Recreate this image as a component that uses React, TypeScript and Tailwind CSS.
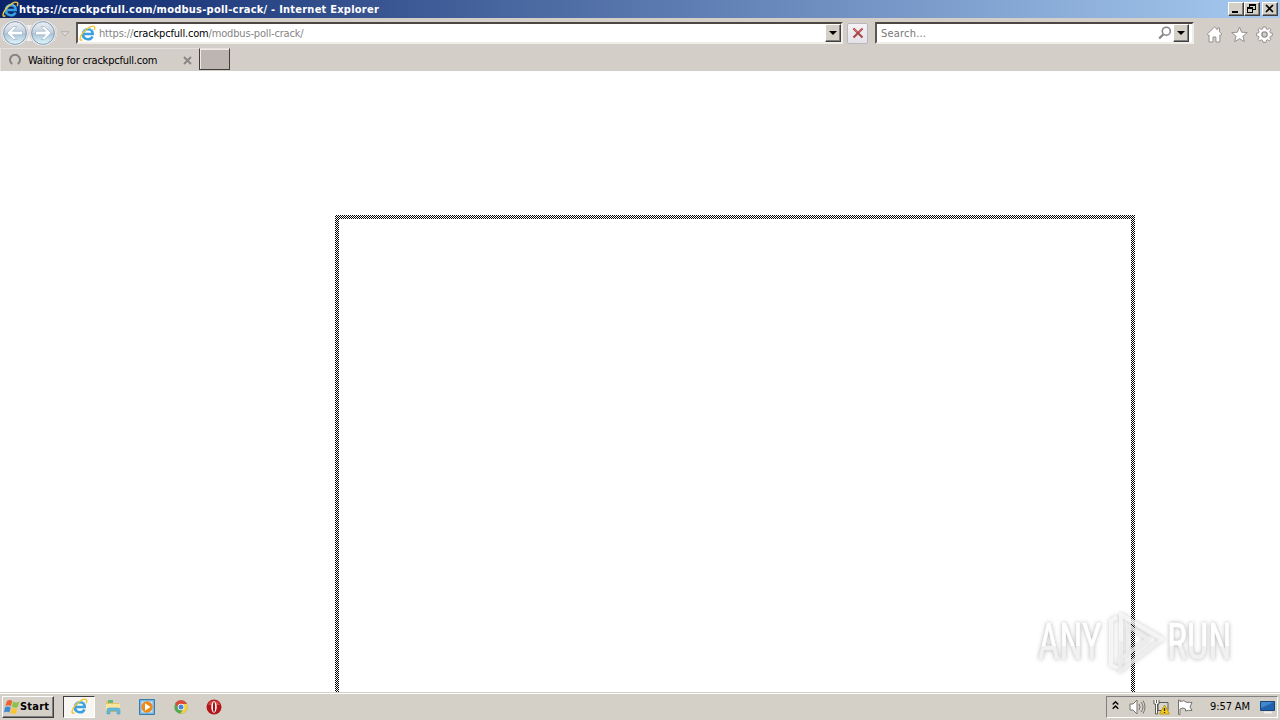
import React from 'react';

const UI_FONT = "font-['DejaVu_Sans_Condensed','DejaVu_Sans',Tahoma,sans-serif] [font-stretch:condensed]";
const CHECKER = 'bg-[repeating-conic-gradient(#000_0_25%,#fff_0_50%)] bg-[length:2px_2px]';
const RAISED = 'bg-[#d4d0c8] border border-t-white border-l-white border-r-[#404040] border-b-[#404040] shadow-[inset_-1px_-1px_0_#808080]';

const IeIcon: React.FC<{ size: number }> = ({ size }) => (
  <svg width={size} height={size} viewBox="0 0 18 18" fill="none" className="shrink-0">
    <path d="M14.3 12.1A5.3 5.2 0 0 1 4.2 9.8C4.4 6.6 6.6 4.6 9.6 4.6c3 0 4.9 2 4.9 5H5.4" stroke="#3a9fe0" strokeWidth="2.7" />
    <path d="M3.6 8.6C4.2 5.4 6.6 3.8 9.8 3.7c2 0 3.6.8 4.6 2.2" stroke="#7fd0f7" strokeWidth="1" />
    <path d="M3.6 15.6C-.2 17.6.6 12.8 4 8.6 7.9 3.6 14.1-.3 16.3 1.8c.8.9.4 2.3-.3 3.6" stroke="#f3c636" strokeWidth="1.5" />
  </svg>
);

const NavButton: React.FC<{ forward?: boolean }> = ({ forward }) => (
  <svg width="28" height="28" viewBox="0 0 28 28" className="shrink-0">
    <defs>
      <linearGradient id={forward ? 'fwd' : 'back'} x1="0" y1="0" x2="0" y2="1">
        <stop offset="0" stopColor="#eef0f4" />
        <stop offset=".48" stopColor="#c3d0de" />
        <stop offset=".52" stopColor="#a9c2d6" />
        <stop offset="1" stopColor="#e0f8fd" />
      </linearGradient>
    </defs>
    <circle cx="14" cy="14" r="13.3" fill="#f0eff0" stroke="#c1bec0" strokeWidth=".7" />
    <circle cx="14" cy="14" r="11.4" fill={`url(#${forward ? 'fwd' : 'back'})`} stroke="#8299ae" strokeWidth="1" />
    <g transform={forward ? 'translate(28 0) scale(-1 1)' : undefined}>
      <path d="m6 14 6.5-6.5h3.4l-4.4 4.7H21.5v3.6h-10l4.4 4.7h-3.4Z" fill="#fff" stroke="#a6bacd" strokeWidth=".8" />
    </g>
  </svg>
);

const DropButton = () => (
  <div className={`w-4 h-[18px] flex items-center justify-center shrink-0 ${RAISED}`}>
    <svg width="8" height="4" viewBox="0 0 8 4"><path d="M0 0h8L4 4Z" fill="#000" /></svg>
  </div>
);

const TitleBar = () => (
  <div className="h-[18px] flex items-center pl-[2px] pr-[2px] bg-[linear-gradient(90deg,#0a246a,#a6caf0)]">
    <IeIcon size={17} />
    <span className="w-[365px] pt-px text-[11px] leading-[16px] tracking-[0.235px] font-bold text-white whitespace-nowrap">
      https://crackpcfull.com/modbus-poll-crack/ - Internet Explorer
    </span>
    <div className="ml-auto flex">
      <div className={`w-4 h-[14px] ${RAISED}`}>
        <svg width="14" height="12" viewBox="0 0 14 12"><path d="M3 8h6v2H3Z" fill="#000" /></svg>
      </div>
      <div className={`w-4 h-[14px] ${RAISED}`}>
        <svg width="14" height="12" viewBox="0 0 14 12" fill="none" stroke="#000" shapeRendering="crispEdges">
          <path d="M4.5 4V1.5h6v5H8M4 2h7M2.5 4.5h5v5h-5ZM2 5h6" />
        </svg>
      </div>
      <div className={`ml-[2px] w-4 h-[14px] ${RAISED}`}>
        <svg width="14" height="12" viewBox="0 0 14 12"><path d="m3 2 7 7m0-7L3 9" stroke="#000" strokeWidth="1.7" /></svg>
      </div>
    </div>
  </div>
);

const AddressRow = () => (
  <div className="h-[30px] flex items-center pl-[1px]">
    <div className="flex items-center rounded-full bg-[linear-gradient(#d4cec9_20%,#f0eeee_20%,#f0eeee_80%,#d4cec9_80%)]">
      <NavButton />
      <NavButton forward />
    </div>
    <svg width="10" height="6" viewBox="0 0 10 6" className="ml-[3px] mt-[2px]">
      <path d="M1 .7h8L5 5Z" fill="#e0dad5" stroke="#b4afad" />
    </svg>
    <div className="ml-[6px] w-[767px] h-[22px] flex items-center bg-white border-2 border-t-[#4c4743] border-l-[#5c5753] border-r-[#f1eeea] border-b-[#f1eeea]">
      <div className="ml-[1px]"><IeIcon size={17} /></div>
      <span className="ml-[3px] pt-[2px] text-[11px] leading-[16px] tracking-[-0.17px] text-[#858585] whitespace-nowrap">
        https://<span className="text-black">crackpcfull.com</span>/modbus-poll-crack/
      </span>
      <div className="ml-auto"><DropButton /></div>
    </div>
    <div className="ml-[4px] w-[21px] h-[21px] flex items-center justify-center rounded-[2px] border border-[#bab7bc] bg-[linear-gradient(#f5f3f6,#e5e2e8)]">
      <svg width="12" height="12" viewBox="0 0 12 12">
        <path d="m1.5 1.5 9 9m0-9-9 9" stroke="#a84b4b" strokeWidth="2.2" />
        <path d="m1 1 4 4m5.5-4L7 5" stroke="#e3706d" strokeWidth="1" />
      </svg>
    </div>
    <div className="ml-[7px] w-[319px] h-[22px] flex items-center bg-white border-2 border-t-[#4c4743] border-l-[#5c5753] border-r-[#f1eeea] border-b-[#f1eeea]">
      <span className="ml-[4px] pt-[2px] text-[11px] leading-[16px] text-[#777] tracking-[0.2px]">Search...</span>
      <svg width="14" height="14" viewBox="0 0 14 14" fill="none" stroke="#858585" className="ml-auto mr-[1px]">
        <circle cx="8.3" cy="5.2" r="4" strokeWidth="1.6" />
        <path d="m5.4 8.2-4.2 4.3" strokeWidth="2.2" />
      </svg>
      <DropButton />
      <div className="w-[3px]" />
    </div>
    <div className="ml-[12px] mt-[3px] flex gap-[8px]">
      <svg width="17" height="17" viewBox="0 0 17 17" fill="#fff" stroke="#96918f">
        <path d="M1 8.3 8.5 1l2.8 2.7V2h2.2v3.9L16 8.3l-1.3 1.2-.8-.7V16h-4v-5H7v5H3V8.8l-.8.7Z" />
      </svg>
      <svg width="17" height="17" viewBox="0 0 17 17" fill="#fff" stroke="#96918f">
        <path d="m8.5 1 2.1 5.2 5.7.4-4.4 3.6 1.5 5.5-4.9-3-4.9 3 1.5-5.5L.7 6.6l5.7-.4Z" />
      </svg>
      <svg width="17" height="17" viewBox="0 0 17 17" fill="#fff" stroke="#96918f">
        <path d="M7 1h3l.4 2 1.3.5 1.7-1.2 1.4 1.4-1 1.8.5 1.3 2 .4v2.6l-2 .5-.5 1.4 1 1.7-1.4 1.5-1.7-1.1-1.3.5-.4 2H7l-.5-2-1.2-.5-1.8 1.1L2 13.4l1.1-1.7-.5-1.4-2-.5V7.2l2-.4.5-1.3L2 3.7l1.5-1.4 1.8 1.2L6.5 3Z" />
        <circle cx="8.5" cy="8.5" r="2.6" fill="#d4cec8" strokeWidth="1.4" />
      </svg>
    </div>
  </div>
);

const TabRow = () => (
  <div className="h-[23px] flex">
    <div className="w-[199px] flex items-center pl-[8px] border-l border-t border-[#e5e0dc] bg-[#d4cec9]">
      <svg width="12" height="12" viewBox="0 0 12 12" fill="none" className="shrink-0">
        <path d="M3.2 10A5 5 0 1 1 8.8 10" stroke="#858181" strokeWidth="2" />
      </svg>
      <span className="ml-[7px] pt-[2px] text-[11px] leading-[16px] tracking-[-0.21px] text-black whitespace-nowrap">Waiting for crackpcfull.com</span>
      <svg width="9" height="9" viewBox="0 0 9 9" className="ml-auto mr-[7px]">
        <path d="m1 1 7 7m0-7L1 8" stroke="#898482" strokeWidth="1.8" />
      </svg>
    </div>
    <div className="w-[31px] h-[22px] bg-[#bdb5b1] border border-l-[#403c3a] border-t-[#e5e0dc] border-r-[#403c3a] border-b-[#403c3a] shadow-[inset_1px_1px_0_#eeeae6]" />
  </div>
);

const Watermark = () => (
  <svg width="250" height="84" viewBox="0 0 250 84" className="absolute left-[1030px] top-[603px] drop-shadow-[0_0_2px_rgba(0,0,0,0.3)]">
    <defs>
      <linearGradient id="wm" x1="0" y1="0" x2="0" y2="1">
        <stop offset=".56" stopColor="#fff" />
        <stop offset=".57" stopColor="#f1f1f1" />
      </linearGradient>
    </defs>
    <g className="font-['Roboto',sans-serif] text-[50px] font-normal" fill="url(#wm)" stroke="url(#wm)" strokeWidth=".6">
      <text transform="translate(8 56) scale(.745 1)">ANY</text>
      <text transform="translate(137 56) scale(.755 1)">RUN</text>
    </g>
    <g fill="none" strokeWidth="4" strokeLinejoin="round" opacity=".7">
      <path d="M87 14 81 18v44l7 3" stroke="#fff" />
      <path d="M91 60V12l41 24-42 32V56l28-20-20-13v27" stroke="#f4f4f4" />
      <path d="M91 38V12l41 24-4 2" stroke="#fff" />
    </g>
  </svg>
);

const Taskbar = () => (
  <div className="h-[28px] shrink-0 flex items-center bg-[#d4d0c8] shadow-[inset_0_1px_0_#d4d0c8,inset_0_2px_0_#fff] pt-[1px] pl-[2px] pr-[2px]">
    <div className={`w-[52px] h-[22px] flex items-center pl-[1px] ${RAISED}`}>
      <svg width="16" height="16" viewBox="0 0 16 16" className="shrink-0">
        <path d="M3 2q3-2 5.3 0L7 7.2Q4.5 5.5 1.4 7Z" fill="#e9652f" />
        <path d="M9.2 2.5q3 1.8 6.1 0L13.8 8Q11 9.5 7.9 7.7Z" fill="#8bc34a" />
        <path d="M1.2 8Q4 6.7 6.8 8.2L5.4 13.5Q3 12-.1 13.3Z" fill="#3e8bd0" />
        <path d="M7.7 8.7q3 1.6 5.8.2L12 14.3q-3 1.5-5.7-.2Z" fill="#f9c631" />
      </svg>
      <span className="pt-px text-[11px] leading-[16px] tracking-[0.2px] font-bold">Start</span>
    </div>
    <div className="ml-[9px] w-[32px] h-[22px] flex items-center justify-center bg-[#f7f6f3] border border-t-[#404040] border-l-[#404040] border-r-white border-b-white">
      <IeIcon size={17} />
    </div>
    <svg width="16" height="16" viewBox="0 0 16 16" className="ml-[10px]">
      <path d="M1 2h5l1 2h7v9H1Z" fill="#e7c45d" />
      <path d="M3 1h5v3H3Z" fill="#66b785" />
      <path d="M1 5h14v7H1Z" fill="#f8e69e" />
      <path d="M2 15v-4q0-2 2-2h9q2 0 2 2v4h-3v-3H5v3Z" fill="#62b9dd" stroke="#4b97b9" strokeWidth=".5" />
    </svg>
    <svg width="16" height="16" viewBox="0 0 16 16" className="ml-[18px]">
      <path d="M.5.5h15v15H.5Z" fill="#79b7e8" stroke="#347dac" />
      <path d="M2.5 2.5h11v11h-11Z" fill="#c9e6f7" />
      <circle cx="8" cy="8" r="5.7" fill="#ec8918" />
      <path d="m6 4.3 5.5 3.7L6 11.7Z" fill="#fff" />
    </svg>
    <svg width="14" height="14" viewBox="0 0 14 14" className="ml-[19px]">
      <circle cx="7" cy="7" r="6.7" fill="#55a852" />
      <path d="M1.2 3.6A6.7 6.7 0 0 1 13 4H7a3 3 0 0 0-2.7 4.3Z" fill="#dc4938" />
      <path d="M13 4a6.7 6.7 0 0 1-6.7 9.7L9.6 8.5Q10.4 6 9 4Z" fill="#f5ce43" />
      <circle cx="7" cy="7" r="3.3" fill="#fff" />
      <circle cx="7" cy="7" r="2.5" fill="#4785d8" />
    </svg>
    <svg width="16" height="16" viewBox="0 0 16 16" className="ml-[18px]">
      <circle cx="8" cy="8" r="7.5" fill="#b3171b" />
      <path d="M2 6a6.4 6.4 0 0 1 12 0Z" fill="#cf4a48" />
      <ellipse cx="8" cy="8" rx="2.7" ry="5.8" fill="#fff" />
      <ellipse cx="8" cy="8" rx="1.1" ry="5" fill="#9d1417" />
    </svg>
    <div className="ml-auto w-[172px] h-[22px] flex items-center border border-t-[#808080] border-l-[#808080] border-r-white border-b-white">
      <svg width="7" height="9" viewBox="0 0 7 9" fill="none" stroke="#000" strokeWidth="1.4" className="ml-[5px] mb-[2px]">
        <path d="m.7 3.5 2.8-2.7 2.8 2.7M.7 7.7 3.5 5l2.8 2.7" />
      </svg>
      <svg width="17" height="16" viewBox="0 0 17 16" className="ml-[10px]" fill="none" stroke="#77736f">
        <path d="M1 5h3l4-4v14l-4-4H1Z" fill="#fff" />
        <path d="M10 5q2 3 0 6M12 3q4 5 0 10M14 1.5q4 6.5 0 13" />
      </svg>
      <svg width="17" height="16" viewBox="0 0 17 16" className="ml-[7px]">
        <path d="M5 3.5h10v8H5Z" fill="#d7d5d0" stroke="#5c5a56" />
        <path d="M8 14.5h7" stroke="#5c5a56" />
        <path d="M1 1v4h1.5v10h2V5H6V1M3.5 1v3" fill="#fff" stroke="#5c5a56" />
        <path d="m11.5 6 5 9h-10Z" fill="#f4cc20" stroke="#c59a17" />
        <path d="M11.5 9v3m0 1v1" stroke="#3a2900" strokeWidth="1.3" />
      </svg>
      <svg width="16" height="16" viewBox="0 0 16 16" className="ml-[7px]" fill="#fff" stroke="#77736f">
        <path d="M1.5 1v14.5h1.5V10q3-2 5.5 0v2q3-1 6.5-.5L13 8l2-4.5q-3-.5-5 0-3-3-7-1V1Z" />
      </svg>
      <span className="ml-[17px] w-[42px] pt-px text-[11px] leading-[16px] tracking-[-0.1px] whitespace-nowrap">9:57 AM</span>
      <svg width="16" height="14" viewBox="0 0 16 14" className="ml-[8px]">
        <path d="M.5 1.5h14v9H.5Z" fill="#2162ad" stroke="#184679" />
        <path d="M1 2h13L1 8Z" fill="#4187cc" />
        <path d="M4 12.5h8" stroke="#eee" strokeWidth="2" />
      </svg>
    </div>
  </div>
);

const App = () => (
  <div className={`relative w-[1280px] h-[720px] overflow-hidden flex flex-col bg-white text-black ${UI_FONT}`}>
    <TitleBar />
    <div className="h-[53px] bg-[#d4cec9]">
      <AddressRow />
      <TabRow />
    </div>
    <main className="flex-1 flex flex-col pt-[144px] pl-[335px]">
      {/* outline of the window being dragged */}
      <div className={`w-[800px] flex-1 flex pt-[4px] px-[4px] ${CHECKER}`}>
        <div className="flex-1 bg-white" />
      </div>
    </main>
    <Taskbar />
    <Watermark />
  </div>
);

export default App;
